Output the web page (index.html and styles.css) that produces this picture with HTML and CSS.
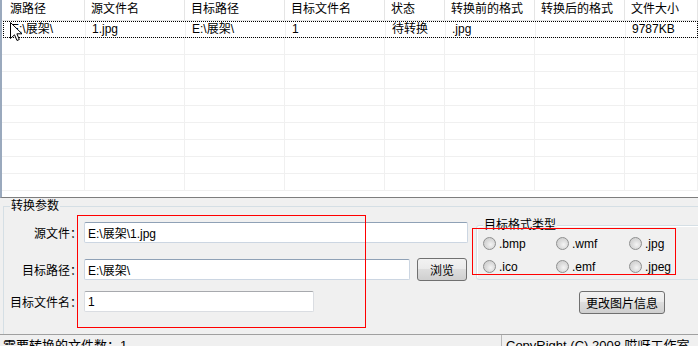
FILE: index.html
```html
<!DOCTYPE html>
<html lang="zh-CN">
<head>
  <meta charset="UTF-8">
  <title>图片格式转换</title>
  <link rel="stylesheet" href="styles.css">
</head>
<body>
  <div class="window">
    <div class="list">
      <div class="row head">
        <span>源路径</span><span>源文件名</span><span>目标路径</span><span>目标文件名</span><span>状态</span><span>转换前的格式</span><span>转换后的格式</span><span>文件大小</span>
      </div>
      <div class="row current">
        <span>E:\展架\</span><span>1.jpg</span><span>E:\展架\</span><span>1</span><span>待转换</span><span>.jpg</span><span></span><span>9787KB</span>
      </div>
      <div class="row"><span></span><span></span><span></span><span></span><span></span><span></span><span></span><span></span></div>
      <div class="row"><span></span><span></span><span></span><span></span><span></span><span></span><span></span><span></span></div>
      <div class="row"><span></span><span></span><span></span><span></span><span></span><span></span><span></span><span></span></div>
      <div class="row"><span></span><span></span><span></span><span></span><span></span><span></span><span></span><span></span></div>
      <div class="row"><span></span><span></span><span></span><span></span><span></span><span></span><span></span><span></span></div>
      <div class="row"><span></span><span></span><span></span><span></span><span></span><span></span><span></span><span></span></div>
      <div class="row"><span></span><span></span><span></span><span></span><span></span><span></span><span></span><span></span></div>
      <div class="row"><span></span><span></span><span></span><span></span><span></span><span></span><span></span><span></span></div>
      <div class="row"><span></span><span></span><span></span><span></span><span></span><span></span><span></span><span></span></div>
    </div>

    <div class="panel">
      <div class="params">
        <span class="group-title">转换参数</span>
        <div class="fields">
          <div class="field f1">
            <label>源文件：</label>
            <input class="text" type="text" value="E:\展架\1.jpg">
          </div>
          <div class="field f2">
            <label>目标路径：</label>
            <input class="text" type="text" value="E:\展架\">
            <button class="btn browse">浏览</button>
          </div>
          <div class="field f3">
            <label>目标文件名：</label>
            <input class="text plain" type="text" value="1">
          </div>
        </div>
        <div class="side">
          <div class="formats">
            <span class="group-title">目标格式类型</span>
            <div class="radios">
              <label class="radio"><i></i>.bmp</label>
              <label class="radio"><i></i>.wmf</label>
              <label class="radio"><i></i>.jpg</label>
              <label class="radio"><i></i>.ico</label>
              <label class="radio"><i></i>.emf</label>
              <label class="radio"><i></i>.jpeg</label>
            </div>
          </div>
          <button class="btn change">更改图片信息</button>
        </div>
      </div>
    </div>

    <div class="status">
      <span class="status-left">需要转换的文件数：1</span>
      <span class="status-right">CopyRight (C) 2008 哎呀工作室</span>
    </div>

    <!-- red annotation boxes + mouse pointer drawn over the window -->
    <div class="mark mark-fields"></div>
    <div class="mark mark-formats"></div>
    <svg class="pointer" width="13" height="20" viewBox="0 0 13 20">
      <path d="M0.5 0.5 L0.5 16.5 L4.5 12.8 L7 18.5 L9.3 17.5 L6.9 11.8 L12 11.8 Z" fill="#fff" stroke="#000" stroke-width="1" stroke-linejoin="miter"/>
    </svg>
  </div>
</body>
</html>
```

FILE: styles.css
```css
/* Basic styling */
body {
  margin: 0;
  font-family: "Liberation Sans", "Noto Sans CJK SC", sans-serif;
  font-size: 12px;
  color: #000;
  background: #f0f0f0;
}
.window {
  position: relative;
  width: 698px;
  height: 346px;
  overflow: hidden;
  background: #f0f0f0;
}

/* file list */
.list {
  height: 198px;
  box-sizing: border-box;
  background: #fff;
  border-left: 2px solid #9aa9bd;
  border-bottom: 1px solid #7d7d7d;
  overflow: hidden;
}
.row {
  display: grid;
  grid-template-columns: 83px 100px 100px 100px 60px 90px 90px 1fr;
  height: 17px;
  box-sizing: border-box;
  border-bottom: 1px solid #f0f0f0;
}
.row span {
  border-right: 1px solid #f0f0f0;
  padding-left: 6px;
  line-height: 16px;
  white-space: nowrap;
  overflow: hidden;
}
.row span:first-child {
  padding-left: 8px;
}
.head {
  height: 21px;
  border-bottom-color: #e5e5e5;
}
.head span {
  line-height: 19px;
  border-right-color: #e5e5e5;
}
.current {
  outline: 1px dotted #000;
  outline-offset: -1px;
  margin-left: 1px;
}

/* lower panel */
.panel {
  height: 136px;
  padding: 8px 0 0 3px;
  box-sizing: border-box;
}
.params {
  position: relative;
  display: flex;
  height: 128px;
  box-sizing: border-box;
  border-top: 1px solid #d5dfe5;
  border-left: 1px solid #d5dfe5;
}
.group-title {
  position: absolute;
  top: -8px;
  left: 6px;
  padding: 0 1px;
  line-height: 15px;
  background: #f0f0f0;
}
.fields {
  width: 464px;
  padding-top: 15px;
}
.field {
  display: flex;
  align-items: center;
}
.field label {
  width: 78px;
  flex: none;
  text-align: right;
}
.text {
  width: 384px;
  height: 21px;
  box-sizing: border-box;
  margin: 0 0 0 2px;
  padding: 0 3px;
  border: 1px solid #ccd6e2;
  border-top-color: #8fa1b6;
  border-radius: 2px;
  font: inherit;
  font-size: 12px;
  color: #000;
  background: #fff;
}
.text.plain {
  width: 230px;
  border-color: #dadde2;
  border-top-color: #a7a9ad;
}
.f1 {
  height: 21px;
}
.f2 {
  height: 23px;
  margin-top: 15px;
}
.f2 .text {
  width: 326px;
}
.f3 {
  height: 21px;
  margin-top: 10px;
}
.btn {
  height: 23px;
  box-sizing: border-box;
  padding: 0;
  border: 1px solid #707070;
  border-radius: 3px;
  background: linear-gradient(#f2f2f2, #ebebeb 45%, #dddddd 50%, #cfcfcf);
  font: inherit;
  font-size: 12px;
  color: #000;
}
.browse {
  width: 50px;
  margin-left: 7px;
}

.side {
  margin-left: 8px;
  padding-top: 18px;
}
.formats {
  position: relative;
  width: 232px;
  height: 55px;
  box-sizing: border-box;
  border: 1px solid #d5dfe5;
  border-radius: 3px;
  box-shadow: inset 1px 1px 0 #fff;
}
.radios {
  display: grid;
  grid-template-columns: 73px 73px 73px;
  grid-auto-rows: 23px;
  padding: 6px 0 0 6px;
}
.radio {
  display: flex;
  align-items: center;
  gap: 3px;
}
.radio i {
  width: 13px;
  height: 13px;
  box-sizing: border-box;
  border: 1px solid #8e8f8f;
  border-radius: 50%;
  background: radial-gradient(circle at 60% 60%, #f4f4f4 0, #dcdcdc 45%, #c8c8c8 100%);
}
.change {
  display: block;
  width: 86px;
  margin: 11px 0 0 103px;
}

/* status bar */
.status {
  display: flex;
  height: 22px;
  border-top: 1px solid #a0a0a0;
  font-size: 13px;
  line-height: 16px;
}
.status-left {
  width: 502px;
  padding: 3px 0 0 3px;
  box-sizing: border-box;
  border-right: 1px solid #b9b9b9;
}
.status-right {
  padding: 3px 0 0 4px;
}

/* overlays */
.mark {
  position: absolute;
  box-sizing: border-box;
  border: 1px solid #f00;
}
.mark-fields {
  left: 77px;
  top: 215px;
  width: 289px;
  height: 113px;
  border-color: #ff0000;
}
.mark-formats {
  left: 472px;
  top: 228px;
  width: 204px;
  height: 47px;
}
.pointer {
  position: absolute;
  left: 10px;
  top: 22px;
}
```
